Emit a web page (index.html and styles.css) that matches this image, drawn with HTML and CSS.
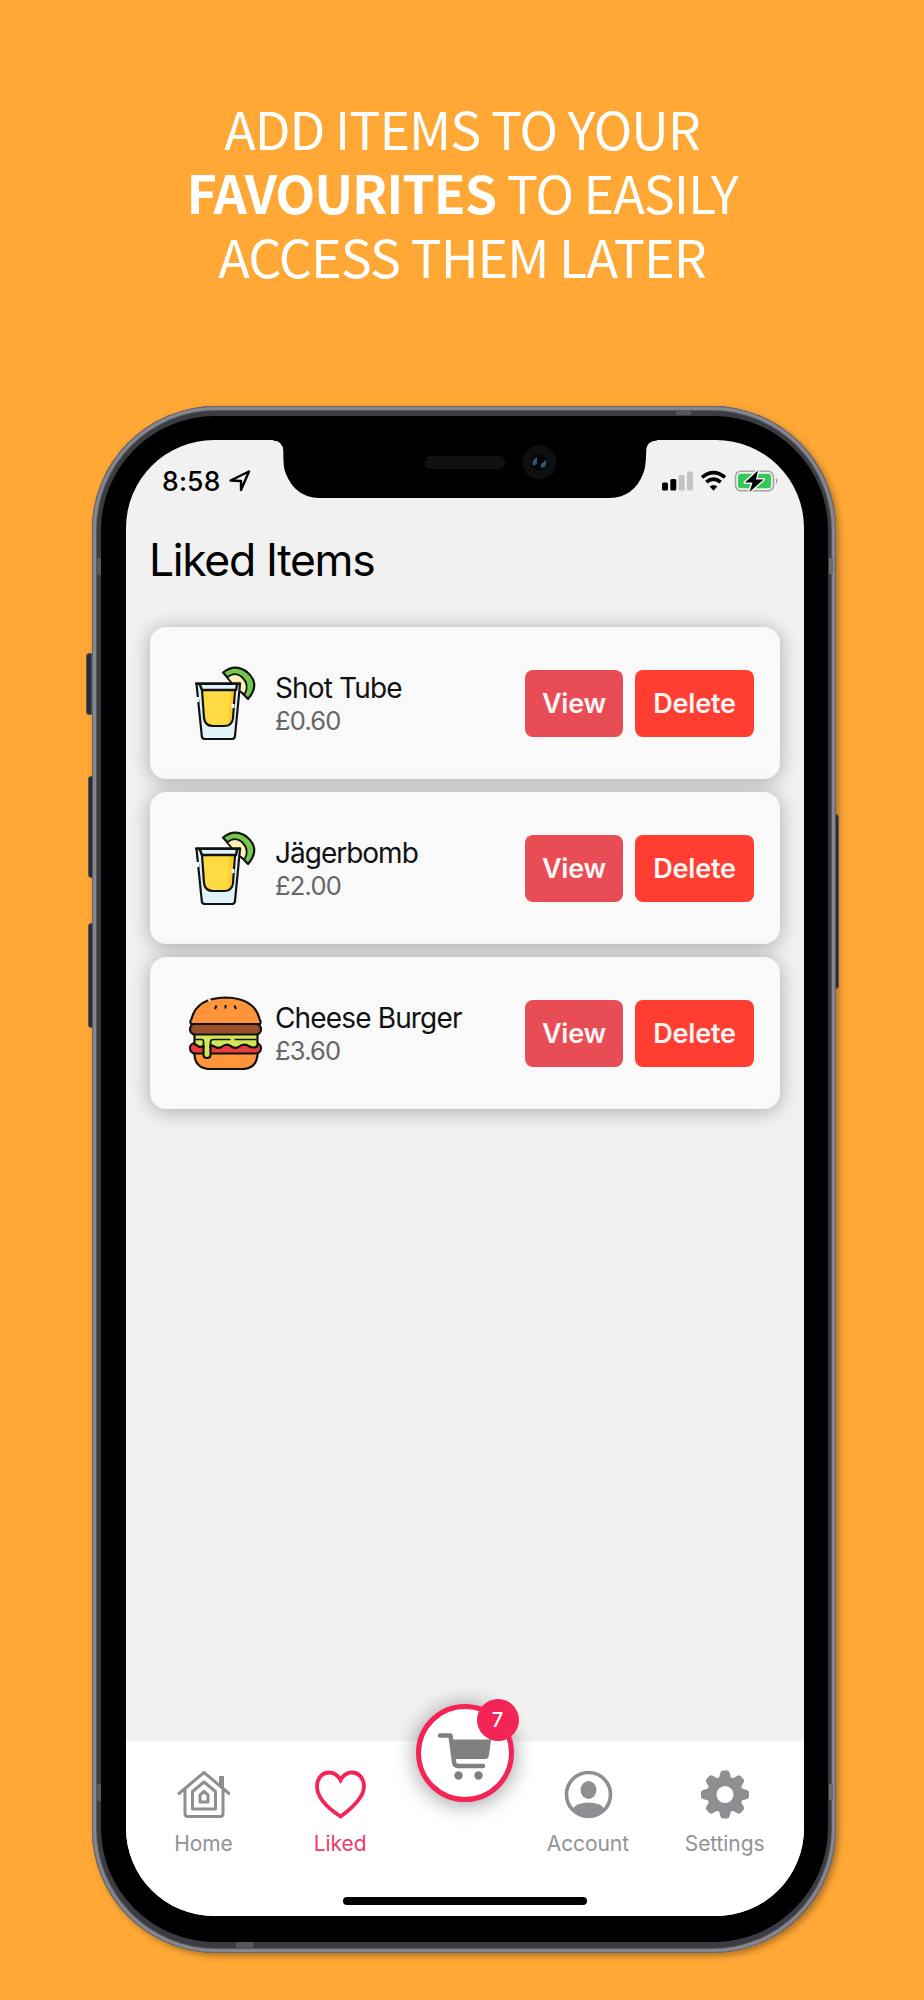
FILE: index.html
```html
<!DOCTYPE html>
<html lang="en">
<head>
<meta charset="utf-8">
<title>Liked Items</title>
<link rel="stylesheet" href="styles.css">
</head>
<body>
<svg class="defs" width="0" height="0">
  <symbol id="shot" viewBox="0 0 74 74">
    <path d="M28 6.500Q40-3 52 6 66 18 53 33L33 12Z" fill="#74c850" stroke="#111" stroke-width="2.200" stroke-linejoin="round"/>
    <path d="M32 11.500Q40 5 47 11 55 19 49.500 28.500L43 24Z" fill="#fff0b8" stroke="#111" stroke-width="1.800" stroke-linejoin="round"/>
    <path d="M1.500 18H45L40 70q-.3 3-3 3H10q-3 0-3.200-3Z" fill="#dff3f8" stroke="#111" stroke-width="2.200" stroke-linejoin="round"/>
    <path d="M7 24h33l-2 28q-.8 8-9 8H18q-8 0-9-8Z" fill="#ffdb43" stroke="#111" stroke-width="2.200"/>
    <path d="M35 25h3.500l-2 28q-1 5-6 6 3-2 3-7Z" fill="#ffc928"/>
    <path d="M1 17.500H45M5 19l2 5M42 19l-1 5M7 24h34" fill="none" stroke="#111" stroke-width="2.400" stroke-linecap="round"/>
    <path d="M2.500 31v5M38 38v4" stroke="#f4fbfd" stroke-width="3"/>
  </symbol>
  <symbol id="burger" viewBox="0 0 74 74">
    <g stroke="#111" stroke-width="2.200" stroke-linejoin="round">
      <path d="M6 54h63v5q-1 13-14 14H20Q7 72 6 59Z" fill="#ff943b"/>
      <rect x="1.500" y="47" width="71" height="10.500" rx="5.200" fill="#e83f3e"/>
      <path d="M6 38h63v12q-4 3-9 0t-10 1q-4 2-8-1t-9 1q-4 2-8-1l-3-1v10q0 3-3.500 3t-3.500-3V50l-4 1-5-3Z" fill="#d2e65a"/>
      <path d="M2.500 28Q1 26 3 23 8 2 37 1.500 66 2 71 23q2 3 .5 5Z" fill="#ff943b"/>
      <rect x="1.500" y="28" width="71" height="10.500" rx="5.200" fill="#99502a"/>
    </g>
    <path d="M7 43.500h6q2 0 2 2V52M22 52v-6q0-2.500 3-2.500h17M46 43.500h22" fill="none" stroke="#111" stroke-width="1.700"/>
    <path d="M28 9.500l-1.500 3.500M37 9v3.500M46 9.500l1.500 3.500" stroke="#111" stroke-width="2"/>
    <path d="M20 3.200l2 2" stroke="#ffe0bf" stroke-width="2.500"/>
  </symbol>
</svg>
<main class="poster">
  <h1 class="headline"><span class="l1">ADD ITEMS TO YOUR</span><span class="l2"><b>FAVOURITES</b> TO EASILY</span><span class="l3">ACCESS THEM LATER</span></h1>
  <div class="phone">
    <i class="key key-mute"></i><i class="key key-up"></i><i class="key key-down"></i><i class="key key-power"></i>
    <i class="seam seam-l1"></i><i class="seam seam-l2"></i><i class="seam seam-r1"></i><i class="seam seam-r2"></i><i class="seam seam-t"></i><i class="seam seam-b"></i>
    <div class="bezel">
      <div class="screen">
        <svg class="notch" width="384" height="60" viewBox="0 0 384 60">
          <defs><pattern id="mesh" width="4" height="4" patternUnits="userSpaceOnUse"><rect width="4" height="4" fill="#0b0b0b"/><path d="M0 0l4 4" stroke="#222"/></pattern></defs>
          <path d="M0-2V.5Q10 1 10.300 11C10.500 18 10 27 13 34Q22 57 46 58H337Q361 57 370 34C373 27 373 18 373.300 9Q374 1 384 .5V-2Z" fill="#000"/>
          <rect x="152" y="16" width="80" height="13" rx="6.500" fill="url(#mesh)"/>
          <circle cx="266.500" cy="22.500" r="17" fill="#0e0f10"/><circle cx="266.500" cy="22.500" r="8" fill="#030406"/>
          <path d="M264 17q-6 3-4 9l4-2ZM273 20q2 7-5 8v-4Z" fill="#345470"/>
        </svg>
        <header class="status">
          <span class="time">8:58</span>
          <svg class="loc" width="22" height="22" viewBox="0 0 22 22"><path d="M1.500 10.500 20 1.500 12 20V11Z" fill="none" stroke="#000" stroke-width="2.400" stroke-linejoin="round"/></svg>
          <svg class="indicators" width="120" height="24" viewBox="0 0 120 24">
            <rect x="1" y="12.500" width="6" height="8" rx="1.500"/><rect x="9.300" y="9" width="6" height="11.500" rx="1.500"/>
            <g fill="#c4c4c4"><rect x="17.600" y="5" width="6" height="15.500" rx="1.500"/><rect x="26" y="1.500" width="6" height="19" rx="1.500"/></g>
            <g fill="none" stroke="#000" stroke-width="3.600"><path d="M41 7.300q11.500-9.500 23 0"/><path d="M45.300 12.200q7.200-6 14.400 0"/></g>
            <path d="M48.700 16.500q3.800-3.200 7.600 0L52.500 20.700Z"/>
            <rect x="74.500" y="1.200" width="38" height="19.500" rx="5.500" fill="#f2f2f2" stroke="#a5a5a5" stroke-width="1.600"/>
            <path d="M115 8q3 3 0 6Z" fill="#999"/>
            <rect x="77" y="3.700" width="33" height="14.500" rx="3" fill="#35c759"/>
            <path d="M97 .5 84 12.500h7.500l-3 9.500L102.500 9.500h-7.500Z" fill="#000" stroke="#f2f2f2" stroke-width="3" paint-order="stroke" stroke-linejoin="round"/>
          </svg>
        </header>
        <h2 class="title">Liked Items</h2>
        <section class="list">
          <article class="card"><svg class="pic" viewBox="0 0 74 74"><use href="#shot" x="6" width="74" height="74"/></svg><div class="info"><p class="name n1">Shot Tube</p><p class="price">£0.60</p></div><button class="btn view">View</button><button class="btn delete">Delete</button></article>
          <article class="card"><svg class="pic" viewBox="0 0 74 74"><use href="#shot" x="6" width="74" height="74"/></svg><div class="info"><p class="name n2">Jägerbomb</p><p class="price">£2.00</p></div><button class="btn view">View</button><button class="btn delete">Delete</button></article>
          <article class="card"><svg class="pic" viewBox="0 0 74 74"><use href="#burger" x="-.5" width="74" height="74"/></svg><div class="info"><p class="name n3">Cheese Burger</p><p class="price">£3.60</p></div><button class="btn view">View</button><button class="btn delete">Delete</button></article>
        </section>
        <nav class="tabs">
          <a class="tab"><svg width="54" height="50" viewBox="-1 0 54 50"><g fill="none" stroke="#8e8e93" stroke-width="3" stroke-linejoin="round" stroke-linecap="round"><path d="M2 23.500 27 2.500 52 23.500M8 20V43.500q0 3 3 3H43q3 0 3-3V20"/><path d="M15.500 39V21.500L27 12l11.500 9.500V39Z"/><path d="M23 32v-7l4-3.500 4 3.500v7Z"/></g><path d="M42 6h5v12l-5-4Z" fill="#8e8e93"/></svg><span>Home</span></a>
          <a class="tab active"><svg width="54" height="50" viewBox="-.5 0 54 50"><path d="M27 46.500Q3.500 31 3.500 16.500C3.500 7.500 9.500 2.500 15.500 2.500Q23 2.500 27 10 31 2.500 38.500 2.500C44.500 2.500 50.500 7.500 50.500 16.500 50.500 31 27 46.500 27 46.500Z" fill="none" stroke="#f42457" stroke-width="3.800"/></svg><span>Liked</span></a>
          <div class="cart"><svg width="54" height="50" viewBox="0 0 54 50"><path d="M3 3.500H13.500L17 30q.5 4 4 4H46" fill="none" stroke="#808080" stroke-width="4.500" stroke-linecap="round" stroke-linejoin="round"/><path d="M14 7.500H54L52 23q-.5 4-4 4H17Z" fill="#808080"/><circle cx="21.500" cy="43.500" r="4.200" fill="#808080"/><circle cx="41.500" cy="43.500" r="4.200" fill="#808080"/></svg><b class="badge">7</b></div>
          <a class="tab"><svg width="54" height="50" viewBox="-.5 0 54 50"><circle cx="27" cy="24.500" r="22" fill="none" stroke="#8e8e93" stroke-width="3.600"/><ellipse cx="27" cy="20" rx="8" ry="9" fill="#8e8e93"/><path d="M11 39q4-6.500 16-6.500T43 39q-6 9-16 9T11 39Z" fill="#8e8e93"/></svg><span>Account</span></a>
          <a class="tab"><svg width="54" height="50" viewBox="-27 -24.500 54 50"><defs><path id="tooth" d="M-6.500-15-4.500-22Q-4-24 -2-24H2Q4-24 4.500-22L6.500-15Z"/></defs><g fill="#8e8e93"><circle r="13.300" fill="none" stroke="#8e8e93" stroke-width="9.500"/><use href="#tooth"/><use href="#tooth" transform="rotate(45)"/><use href="#tooth" transform="rotate(90)"/><use href="#tooth" transform="rotate(135)"/><use href="#tooth" transform="rotate(180)"/><use href="#tooth" transform="rotate(225)"/><use href="#tooth" transform="rotate(270)"/><use href="#tooth" transform="rotate(315)"/></g></svg><span>Settings</span></a>
          <i class="home-bar"></i>
        </nav>
      </div>
    </div>
  </div>
</main>
</body>
</html>
```

FILE: styles.css
```css
* { box-sizing: border-box; }
body { margin: 0; background: #ffa836; font-family: Inter, "Liberation Sans", sans-serif; }
.defs { position: absolute; }
.poster { width: 924px; height: 2000px; overflow: hidden; background: #ffa836; padding-top: 96px; }
.headline { margin: 0; height: 310px; color: #fff; font: 400 52px/64px "Noto Sans CJK SC", sans-serif; letter-spacing: -1px; text-align: center; }
.headline span { display: block; white-space: nowrap; }
.headline b { font-weight: 700; letter-spacing: -1.1px; }
.phone { position: relative; width: 744px; height: 1547px; margin-left: 92px; padding: 10px 8px 11px 9px; border-radius: 124px; background: #3b3c42; box-shadow: inset 0 0 0 1px #66676c, inset 0 0 0 4px #85868e, inset 0 0 0 5px #55565d, 3px 3px 6px rgba(60,35,0,.4); }
.bezel { height: 100%; padding: 24px 24px 26px 25px; border-radius: 114px; background: #000; }
.screen { position: relative; display: flex; flex-direction: column; width: 678px; height: 1476px; border-radius: 88px; background: #f1f1f2; overflow: hidden; }
.key { position: absolute; z-index: 1; border: 1px solid #57545a; background: #2b2c35; border-radius: 3px 0 0 3px; }
.key-mute { left: -6px; top: 247px; width: 6px; height: 62px; }
.key-up { left: -4px; top: 370px; width: 5px; height: 102px; }
.key-down { left: -4px; top: 517px; width: 5px; height: 105px; }
.key-power { right: -3px; top: 408px; width: 4px; height: 175px; border-radius: 0 3px 3px 0; }
.seam { position: absolute; background: #56575c; }
.seam-l1, .seam-l2 { left: 4px; width: 5px; height: 17px; }
.seam-r1, .seam-r2 { right: 3px; width: 4px; height: 16px; background: #6a6b70; }
.seam-l1, .seam-r1 { top: 152px; }
.seam-l2, .seam-r2 { top: 1378px; }
.seam-t { left: 584px; top: 4px; width: 15px; height: 5px; }
.seam-b { left: 144px; bottom: 5px; width: 17px; height: 6px; }
.notch { position: absolute; left: 147px; top: 0; }
.status { display: flex; height: 74px; padding: 26px 23px 0 36px; align-items: flex-start; }
.time { font-size: 26.500px; line-height: 30px; font-weight: 500; letter-spacing: .2px; width: 67px; }
.loc { margin-top: 4px; }
.indicators { margin: 4px 0 0 auto; }
.title { margin: 13px 0 0 23px; font-size: 44.500px; line-height: 66px; font-weight: 400; letter-spacing: -1.350px; }
.list { display: flex; flex-direction: column; gap: 13px; padding: 34px 24px 0; }
.card { display: flex; align-items: center; height: 152px; padding: 0 26px 0 39px; border-radius: 16px; background: #f9f9f9; box-shadow: 0 2px 20px rgba(0,0,0,.3); }
.pic { width: 74px; height: 74px; overflow: visible; }
.info { flex: 1; padding: 1px 0 0 12px; }
.name, .price { margin: 0; white-space: nowrap; }
.name { font-size: 28px; line-height: 34px; letter-spacing: -.85px; color: #111; }
.n2 { letter-spacing: -1px; }
.price { font-size: 25.500px; line-height: 31px; letter-spacing: -.8px; color: #666; }
.btn { height: 67px; padding: 0; border: 0; border-radius: 8px; color: #fff5f5; font: 560 27px/67px Inter, "Liberation Sans", sans-serif; letter-spacing: -.2px; }
.view { width: 98px; margin-right: 12px; background: #e84d55; }
.delete { width: 119px; background: #ff3d31; }
.tabs { position: relative; display: flex; margin-top: auto; height: 175px; padding: 29px 11px 0 9px; background: #fff; }
.tab { width: 137px; display: flex; flex-direction: column; align-items: center; gap: 11px; color: #929297; font-size: 21px; line-height: 26px; letter-spacing: -.1px; }
.tab.active { color: #f03a68; }
.cart { position: relative; width: 98px; height: 98px; margin: -66px 6px 0 7px; flex: none; border: 5px solid #f42457; border-radius: 50%; background: #fff; box-shadow: 0 2px 22px rgba(0,0,0,.4); }
.cart svg { position: absolute; left: 16px; top: 23px; }
.badge { position: absolute; left: 56px; top: -10px; width: 42px; height: 42px; border-radius: 50%; background: #f42457; color: #fff; font-size: 20px; line-height: 42px; font-weight: 500; text-align: center; }
.home-bar { position: absolute; left: 217px; bottom: 11px; width: 244px; height: 8px; border-radius: 4px; background: #000; }
```
